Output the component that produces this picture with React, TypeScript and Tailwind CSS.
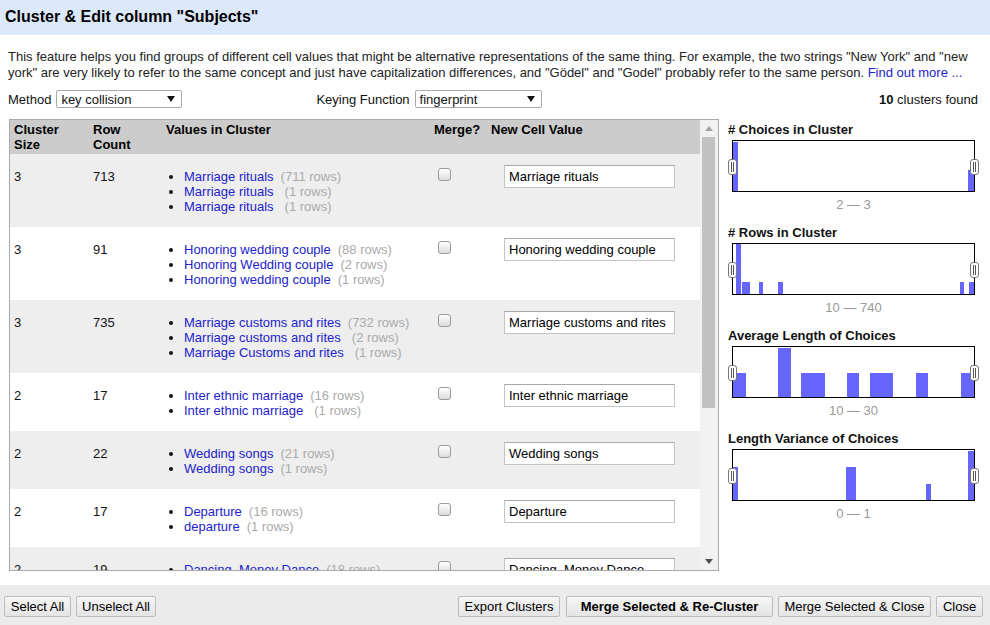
import React from "react";

type Choice = { value: string; count: number; gap?: number };
type Cluster = { size: number; rows: number; choices: Choice[]; newValue: string };

const clusters: Cluster[] = [
  {
    size: 3,
    rows: 713,
    newValue: "Marriage rituals",
    choices: [
      { value: "Marriage rituals", count: 711 },
      { value: "Marriage rituals", count: 1, gap: 11 },
      { value: "Marriage rituals", count: 1, gap: 11 },
    ],
  },
  {
    size: 3,
    rows: 91,
    newValue: "Honoring wedding couple",
    choices: [
      { value: "Honoring wedding couple", count: 88 },
      { value: "Honoring Wedding couple", count: 2 },
      { value: "Honoring wedding couple", count: 1 },
    ],
  },
  {
    size: 3,
    rows: 735,
    newValue: "Marriage customs and rites",
    choices: [
      { value: "Marriage customs and rites", count: 732 },
      { value: "Marriage customs and rites", count: 2, gap: 11 },
      { value: "Marriage Customs and rites", count: 1, gap: 11 },
    ],
  },
  {
    size: 2,
    rows: 17,
    newValue: "Inter ethnic marriage",
    choices: [
      { value: "Inter ethnic marriage", count: 16 },
      { value: "Inter ethnic marriage", count: 1, gap: 11 },
    ],
  },
  {
    size: 2,
    rows: 22,
    newValue: "Wedding songs",
    choices: [
      { value: "Wedding songs", count: 21 },
      { value: "Wedding songs", count: 1 },
    ],
  },
  {
    size: 2,
    rows: 17,
    newValue: "Departure",
    choices: [
      { value: "Departure", count: 16 },
      { value: "departure", count: 1 },
    ],
  },
  {
    size: 2,
    rows: 19,
    newValue: "Dancing, Money Dance",
    choices: [
      { value: "Dancing, Money Dance", count: 18 },
      { value: "Dancing, money dance", count: 1 },
    ],
  },
];

// bars are [x, y, w, h] inside a 241x50 plot area
type Bar = [number, number, number, number];

const histograms: { title: string; range: string; bars: Bar[] }[] = [
  {
    title: "# Choices in Cluster",
    range: "2 — 3",
    bars: [
      [0, 1, 5, 49],
      [235, 29, 6, 21],
    ],
  },
  {
    title: "# Rows in Cluster",
    range: "10 — 740",
    bars: [
      [3, 0, 5, 50],
      [9, 38, 8, 12],
      [26, 38, 4, 12],
      [45, 38, 5, 12],
      [227, 38, 4, 12],
      [236, 38, 5, 12],
    ],
  },
  {
    title: "Average Length of Choices",
    range: "10 — 30",
    bars: [
      [0, 26, 13, 24],
      [45, 1, 13, 49],
      [68, 26, 24, 24],
      [114, 26, 12, 24],
      [137, 26, 23, 24],
      [183, 26, 12, 24],
      [228, 26, 13, 24],
    ],
  },
  {
    title: "Length Variance of Choices",
    range: "0 — 1",
    bars: [
      [0, 17, 5, 33],
      [113, 17, 10, 33],
      [193, 34, 5, 16],
      [235, 1, 6, 49],
    ],
  },
];

const cols = "grid grid-cols-[79px_73px_268px_57px_1fr]";

function FakeSelect({ value, width }: { value: string; width: string }) {
  return (
    <div
      className={`flex h-[18px] items-center justify-between rounded-[2px] border border-[#a9a9a9] bg-white pl-[4px] pr-[6px] ${width}`}
    >
      <span>{value}</span>
      <svg width="8" height="6" viewBox="0 0 8 6">
        <path d="M0 0 L8 0 L4 6 Z" fill="#111" />
      </svg>
    </div>
  );
}

function Checkbox() {
  return (
    <span className="block h-[13px] w-[13px] rounded-[3px] border border-[#9a9a9a] bg-gradient-to-b from-white to-[#dcdcdc]" />
  );
}

function ClusterRow({ cluster, shaded }: { cluster: Cluster; shaded: boolean }) {
  return (
    <div className={`${cols} ${shaded ? "bg-[#eeeeee]" : "bg-white"}`}>
      <div className="pl-[4px] pt-[15px]">{cluster.size}</div>
      <div className="pl-[4px] pt-[15px]">{cluster.rows}</div>
      <ul className="list-disc pb-[13px] pl-[22px] pt-[15px]">
        {cluster.choices.map((c, i) => (
          <li key={i}>
            <span className="text-[#2222cc]">{c.value}</span>
            <span className="text-[#aaaaaa]" style={{ marginLeft: c.gap ?? 7 }}>
              ({c.count} rows)
            </span>
          </li>
        ))}
      </ul>
      <div className="pl-[8px] pt-[14px]">
        <Checkbox />
      </div>
      <div className="pl-[17px] pt-[11px]">
        <div className="flex h-[23px] w-[171px] items-center border border-[#c4c4c4] border-t-[#a8a8a8] bg-white pl-[4px] text-black">
          {cluster.newValue}
        </div>
      </div>
    </div>
  );
}

function Histogram({ title, range, bars }: { title: string; range: string; bars: Bar[] }) {
  return (
    <div className="mb-[13px]">
      <div className="pb-[3px] font-bold">{title}</div>
      <div className="relative ml-[4px] h-[52px] w-[243px] border border-black bg-white">
        <svg width="241" height="50" viewBox="0 0 241 50" className="block">
          {bars.map(([x, y, w, h], i) => (
            <rect key={i} x={x} y={y} width={w} height={h} fill="#6666ff" />
          ))}
        </svg>
        {/* range handles sit over the box edges */}
        <span className="absolute left-[-5px] top-[18px] flex h-[16px] w-[9px] items-center justify-center gap-[1px] rounded-[3px] border border-[#777] bg-white">
          <span className="h-[10px] w-[1px] bg-[#555]" />
          <span className="h-[10px] w-[1px] bg-[#555]" />
        </span>
        <span className="absolute right-[-5px] top-[18px] flex h-[16px] w-[9px] items-center justify-center gap-[1px] rounded-[3px] border border-[#777] bg-white">
          <span className="h-[10px] w-[1px] bg-[#555]" />
          <span className="h-[10px] w-[1px] bg-[#555]" />
        </span>
      </div>
      <div className="ml-[4px] w-[243px] pt-[5px] text-center text-[#999999]">{range}</div>
    </div>
  );
}

function Button({ label, width, bold = false }: { label: string; width: string; bold?: boolean }) {
  return (
    <button
      className={`h-[21px] rounded-[2px] border border-[#bcbcbc] bg-gradient-to-b from-[#f6f6f6] to-[#e4e4e4] text-[13px] leading-[19px] text-black ${width} ${
        bold ? "font-bold" : ""
      }`}
    >
      {label}
    </button>
  );
}

export default function App() {
  return (
    <div className="flex h-[625px] w-[990px] flex-col overflow-hidden bg-white font-['Liberation_Sans',Arial,sans-serif] text-[13px] leading-[15px] text-[#111]">
      <div className="flex h-[35px] shrink-0 items-center bg-[#dce8fb] pb-[2px] pl-[5px] text-[16px] font-bold text-black">
        Cluster &amp; Edit column "Subjects"
      </div>

      <p className="px-[8px] pt-[14px] leading-[16px] text-[#222]">
        This feature helps you find groups of different cell values that might be alternative representations of
        the same thing. For example, the two strings "New York" and "new york" are very likely to refer to the same
        concept and just have capitalization differences, and "Gödel" and "Godel" probably refer to the same person.{" "}
        <span className="text-[#2222cc]">Find out more ...</span>
      </p>

      <div className="mt-[8px] flex h-[20px] items-center pl-[8px] pr-[12px]">
        <span className="mr-[5px]">Method</span>
        <FakeSelect value="key collision" width="w-[126px]" />
        <span className="ml-[134px] mr-[5px]">Keying Function</span>
        <FakeSelect value="fingerprint" width="w-[127px]" />
        <span className="ml-auto">
          <b>10</b> clusters found
        </span>
      </div>

      <div className="mt-[10px] flex pl-[9px]">
        <div className="flex h-[452px] w-[710px] border border-[#a9a9a9]">
          <div className="w-[690px] overflow-hidden">
            <div className={`${cols} h-[34px] bg-[#cccccc] pt-[2px] font-bold text-black`}>
              <div className="pl-[4px]">
                Cluster
                <br />
                Size
              </div>
              <div className="pl-[4px]">
                Row
                <br />
                Count
              </div>
              <div className="pl-[4px]">Values in Cluster</div>
              <div className="pl-[4px]">Merge?</div>
              <div className="pl-[4px]">New Cell Value</div>
            </div>
            {clusters.map((c, i) => (
              <ClusterRow key={i} cluster={c} shaded={i % 2 === 0} />
            ))}
          </div>
          <div className="flex w-[18px] flex-col bg-[#f1f1f1]">
            <div className="flex h-[17px] items-center justify-center">
              <svg width="8" height="5" viewBox="0 0 8 5">
                <path d="M0 5 L4 0 L8 5 Z" fill="#a3a3a3" />
              </svg>
            </div>
            <div className="ml-[2px] h-[271px] w-[13px] bg-[#c1c1c1]" />
            <div className="flex-1" />
            <div className="flex h-[17px] items-center justify-center">
              <svg width="8" height="5" viewBox="0 0 8 5">
                <path d="M0 0 L8 0 L4 5 Z" fill="#505050" />
              </svg>
            </div>
          </div>
        </div>

        <div className="ml-[9px] pt-[3px]">
          {histograms.map((h) => (
            <Histogram key={h.title} title={h.title} range={h.range} bars={h.bars} />
          ))}
        </div>
      </div>

      <div className="mt-[14px] flex flex-1 items-start bg-[#ebebeb] pl-[4px] pr-[7px] pt-[11px]">
        <div className="flex gap-[5px]">
          <Button label="Select All" width="w-[67px]" />
          <Button label="Unselect All" width="w-[80px]" />
        </div>
        <div className="ml-auto flex gap-[5px]">
          <Button label="Export Clusters" width="w-[102px] mr-[1px]" />
          <Button label="Merge Selected & Re-Cluster" width="w-[207px]" bold />
          <Button label="Merge Selected & Close" width="w-[153px]" />
          <Button label="Close" width="w-[47px]" />
        </div>
      </div>
    </div>
  );
}
